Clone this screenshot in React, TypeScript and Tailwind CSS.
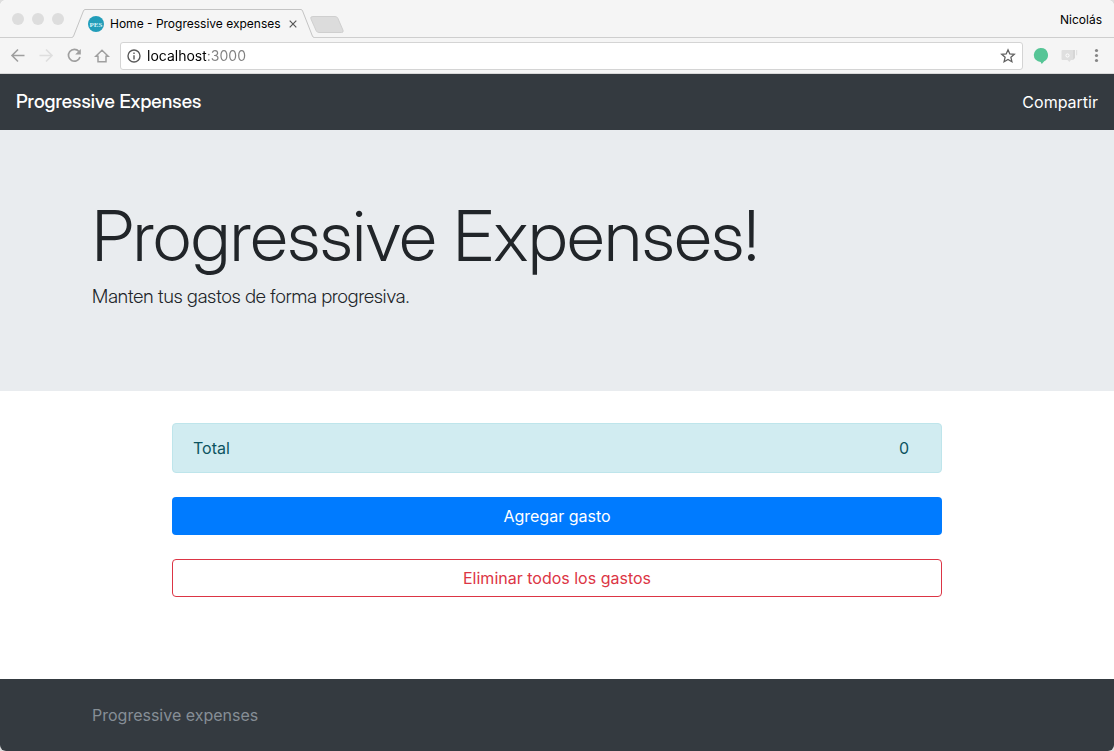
import { useState } from "react";
import type { ReactNode } from "react";

function IconButton({ label, className, children }: { label: string; className: string; children: ReactNode }) {
  return (
    <button type="button" aria-label={label} className={`flex shrink-0 items-center justify-center ${className}`}>
      {children}
    </button>
  );
}

function TabStrip() {
  return (
    <div className="flex h-[38px] items-end border-b border-[#cecece] pl-3">
      <div className="flex h-[37px] items-center gap-2" aria-hidden="true">
        <span className="size-3 rounded-full bg-[#dddddd]" />
        <span className="size-3 rounded-full bg-[#dddddd]" />
        <span className="size-3 rounded-full bg-[#dddddd]" />
      </div>
      <div className="-mb-px ml-2 flex h-[29px] items-stretch">
        <svg className="w-[13px]" viewBox="0 0 13 29" fill="none" aria-hidden="true">
          <path d="M0 28.5 L13 0 V29 H0Z" fill="#f5f5f5" />
          <path d="M0 28.5 Q1 28.2 1.6 27 L11.4 2 Q12 .5 13 .5" stroke="#c4c4c4" />
        </svg>
        <div className="flex w-[216px] items-center border-t border-[#c4c4c4] bg-[#f5f5f5] pl-[3px] font-['Inter',sans-serif] text-[12px] text-black">
          <svg className="mr-[6px] size-4 shrink-0" viewBox="0 0 16 16" aria-hidden="true">
            <circle cx="8" cy="8" r="8" fill="#229db9" />
            <text x="8" y="10.5" textAnchor="middle" fontSize="7" fontWeight="bold" fontFamily="Liberation Serif, serif" fill="#d5f2f8">PES</text>
          </svg>
          <span className="whitespace-nowrap">Home - Progressive expenses</span>
          <IconButton label="Cerrar pestaña" className="ml-auto size-4 text-[#555]">
            <svg className="size-2" viewBox="0 0 8 8" stroke="currentColor" strokeWidth="1.2" fill="none">
              <path d="M.7.7 7.3 7.3M7.3.7.7 7.3" />
            </svg>
          </IconButton>
        </div>
        <svg className="w-[13px]" viewBox="0 0 13 29" fill="none" aria-hidden="true">
          <path d="M0 0 L13 28.5 V29 H0Z" fill="#f5f5f5" />
          <path d="M0 .5 Q1 .5 1.6 2 L11.4 27 Q12 28.2 13 28.5" stroke="#c4c4c4" />
        </svg>
      </div>
      <IconButton label="Nueva pestaña" className="-ml-1 h-[26px] w-[34px]">
        <svg className="h-[17px] w-[34px]" viewBox="0 0 34 17">
          <path d="M3 .5H25Q27 .5 27.8 2.2L33 14.2Q33.8 16.5 31.5 16.5H9Q7 16.5 6.2 14.8L.9 2.8Q0 .5 3 .5Z" fill="#dcdcdc" stroke="#cfcfcf" />
        </svg>
      </IconButton>
      <button type="button" className="mr-3 ml-auto h-[35px] font-['Inter',sans-serif] text-[12px] text-black">Nicolás</button>
    </div>
  );
}

function Toolbar() {
  const [url, setUrl] = useState("localhost:3000");
  return (
    <div className="flex h-9 items-center border-b border-[#d8d8d8] pr-[10px] pl-[10px]">
      <div className="flex gap-3 text-[#9f9f9f]">
        <IconButton label="Atrás" className="size-4">
          <svg className="size-4" viewBox="0 0 16 16" fill="none" stroke="currentColor" strokeWidth="1.6">
            <path d="M14.5 7.5H2.5M8 1.5 2 7.5l6 6" />
          </svg>
        </IconButton>
        <IconButton label="Adelante" className="size-4 text-[#dedede]">
          <svg className="size-4" viewBox="0 0 16 16" fill="none" stroke="currentColor" strokeWidth="1.6">
            <path d="M1.5 7.5h12M8 1.5l6 6-6 6" />
          </svg>
        </IconButton>
        <IconButton label="Recargar" className="size-4">
          <svg className="size-4" viewBox="0 0 16 16" fill="none" stroke="currentColor" strokeWidth="1.7">
            <path d="M12.9 3.5A5.9 5.9 0 1 0 14 9" />
            <path d="M14.8 1V6.6H9.2Z" fill="currentColor" stroke="none" />
          </svg>
        </IconButton>
        <IconButton label="Inicio" className="size-4">
          <svg className="size-4" viewBox="0 0 16 16" fill="none" stroke="currentColor" strokeWidth="1.5">
            <path d="M1.8 8.3 8 2.2l6.2 6.1H12v5.4H4V8.3Z" />
          </svg>
        </IconButton>
      </div>
      <div className="ml-[10px] flex h-7 min-w-0 flex-1 items-center rounded-[3px] border border-[#d4d4d4] bg-white px-[6px]">
        <svg className="size-[14px] shrink-0" viewBox="0 0 14 14" fill="none" stroke="#5a5a5a" strokeWidth="1.4" aria-hidden="true">
          <circle cx="7" cy="7" r="6" />
          <path d="M7 6.2V10.4M7 3.6V5" />
        </svg>
        <input
          aria-label="Dirección"
          value={url}
          onChange={(event) => setUrl(event.target.value)}
          className="ml-[6px] h-6 min-w-0 flex-1 bg-[linear-gradient(to_right,#000_59px,#808080_59px)] bg-clip-text font-['Inter',sans-serif] text-[14px] text-transparent caret-black outline-none"
        />
        <IconButton label="Añadir a favoritos" className="size-4 text-[#606060]">
          <svg className="size-4" viewBox="0 0 16 16" fill="none" stroke="currentColor" strokeWidth="1.3">
            <path d="m8 1.8 1.8 4.1 4.5.4-3.4 3 1 4.4L8 11.4l-3.9 2.3 1-4.4-3.4-3 4.5-.4Z" />
          </svg>
        </IconButton>
      </div>
      <IconButton label="Mensajes" className="ml-[10px] size-4">
        <svg className="size-4" viewBox="0 0 16 16" fill="#56c596">
          <path d="M8 0a7 7 0 0 1 3.2 13.2L8.8 16 7.6 14A7 7 0 0 1 8 0Z" />
        </svg>
      </IconButton>
      <IconButton label="Videollamada" className="ml-3 h-4 w-[17px]">
        <svg className="h-4 w-[17px]" viewBox="0 0 17 16">
          <path d="M1.5 2H12V12H10L8.3 14 6.5 12H1.5Q.5 12 .5 11V3Q.5 2 1.5 2Z" fill="#dfdfdf" />
          <path d="M12 2H14V10L12 12Z" fill="#d6d6d6" />
          <path d="M15 2h1.2v5.2H15Z" fill="#e2e2e2" />
          <circle cx="6.5" cy="7.5" r="1.6" fill="none" stroke="#fff" />
        </svg>
      </IconButton>
      <IconButton label="Menú" className="ml-[11px] h-4 w-[15px]">
        <svg className="h-4 w-[15px]" viewBox="0 0 15 16" fill="#868686">
          <circle cx="7.5" cy="2.5" r="1.6" />
          <circle cx="7.5" cy="7.5" r="1.6" />
          <circle cx="7.5" cy="12.5" r="1.6" />
        </svg>
      </IconButton>
    </div>
  );
}

export default function App() {
  return (
    <div className="bg-[#dedede]">
      <div className="flex min-h-screen flex-col overflow-hidden rounded-[6px] bg-white font-['Inter','Liberation_Sans',sans-serif] text-[16px] leading-6 text-[#212529]">
        <div className="bg-[#f5f5f5]">
          <TabStrip />
          <Toolbar />
        </div>
        <nav className="flex h-14 items-center justify-between bg-[#343a40] px-4 text-white">
          <a href="#inicio" className="font-['Inter_Display','Roboto',sans-serif] text-[19px] font-medium">Progressive Expenses</a>
          <a href="#compartir">Compartir</a>
        </nav>
        <header className="bg-[#e9ecef] py-16 font-['Inter_Display','Roboto',sans-serif]">
          <div className="mx-auto max-w-[960px] px-[15px]">
            <h1 className="mb-1 text-[70px] leading-[84px] font-light">Progressive Expenses!</h1>
            <p className="mb-[15px] text-[19px] leading-[30px] font-light">Manten tus gastos de forma progresiva.</p>
          </div>
        </header>
        <main className="mx-auto flex w-full max-w-[770px] flex-1 flex-col gap-6 pt-8 pb-16">
          <div className="flex h-[50px] shrink-0 items-center justify-between rounded-[4px] border border-[#bee5eb] bg-[#d1ecf1] pr-8 pl-5 text-[#0c5460]">
            <span>Total</span>
            <span>0</span>
          </div>
          <button type="button" className="h-[38px] shrink-0 rounded-[4px] bg-[#007bff] text-white">Agregar gasto</button>
          <button type="button" className="h-[38px] shrink-0 rounded-[4px] border border-[#dc3545] bg-white text-[#dc3545]">Eliminar todos los gastos</button>
        </main>
        <footer className="bg-[#343a40] py-6 text-[#868e96]">
          <div className="mx-auto max-w-[960px] px-[15px]">Progressive expenses</div>
        </footer>
      </div>
    </div>
  );
}
